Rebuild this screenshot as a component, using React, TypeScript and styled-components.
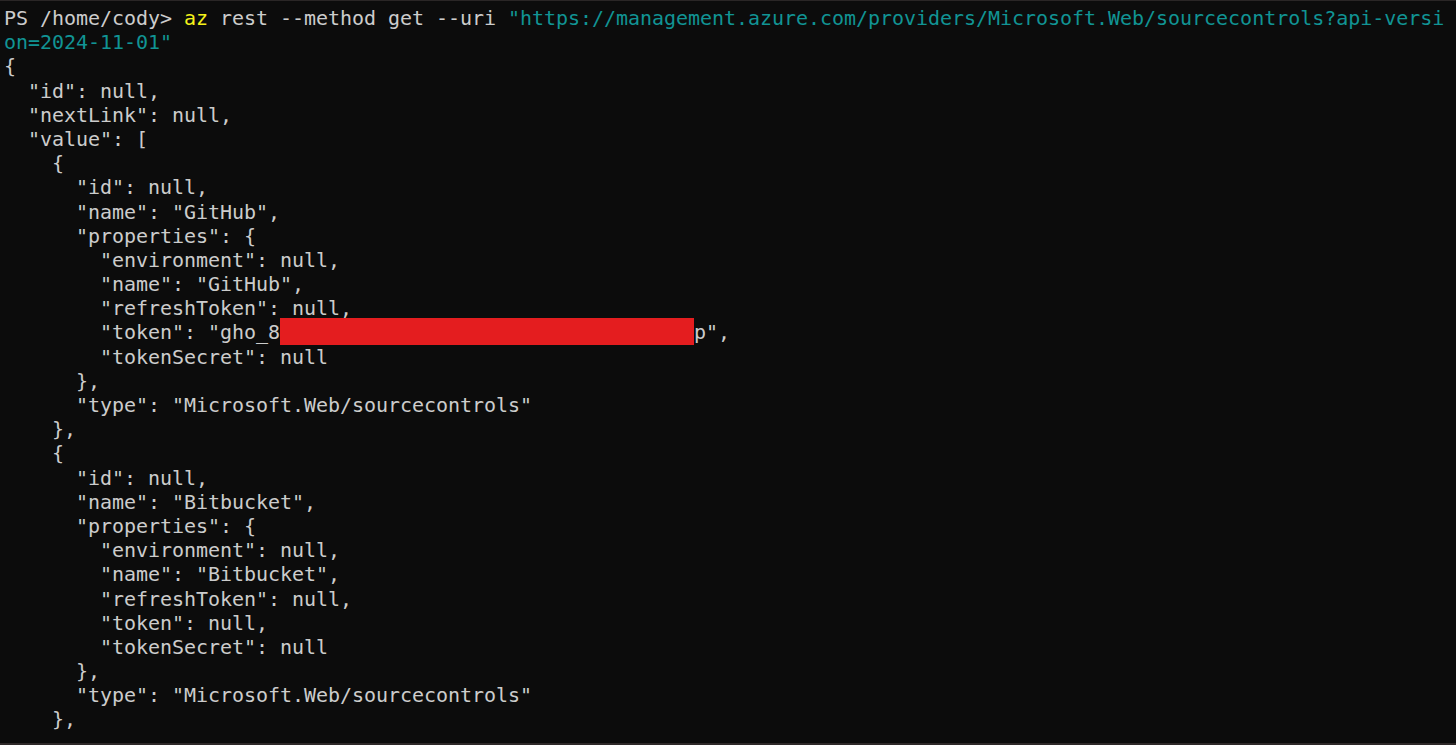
import React from "react";
import styled, { createGlobalStyle } from "styled-components";

const GlobalStyle = createGlobalStyle`
  html, body {
    margin: 0;
    padding: 0;
    background: #0c0c0c;
  }
  #root {
    width: 1456px;
    height: 745px;
  }
`;

const Window = styled.div`
  box-sizing: border-box;
  width: 1456px;
  height: 745px;
  overflow: hidden;
  background: #0c0c0c;
  border-top: 1px solid #2a2626;
  border-bottom: 2px solid #2e2828;
`;

const Buffer = styled.div`
  display: flex;
  flex-direction: column;
  padding: 5px 0 0 4px;
  font-family: "DejaVu Sans Mono", "Liberation Mono", monospace;
  font-size: 20px;
  letter-spacing: -0.04px;
  color: #cccccc;
`;

const Line = styled.div`
  height: 24.2px;
  line-height: 24.2px;
  white-space: pre;
`;

const Command = styled.span`
  color: #f5f21a;
`;

const Quoted = styled.span`
  color: #119494;
`;

const Redacted = styled.span`
  display: inline-block;
  width: 414px;
  height: 24px;
  vertical-align: top;
  background: #e41d1f;
  box-shadow: 0 -2px 0 #e41d1f, 0 1px 0 #e41d1f;
`;

type Row = { indent: number; text: React.ReactNode };

const sourceControl = (name: string, token: React.ReactNode, last: boolean): Row[] => [
  { indent: 4, text: "{" },
  { indent: 6, text: `"id": null,` },
  { indent: 6, text: `"name": "${name}",` },
  { indent: 6, text: `"properties": {` },
  { indent: 8, text: `"environment": null,` },
  { indent: 8, text: `"name": "${name}",` },
  { indent: 8, text: `"refreshToken": null,` },
  { indent: 8, text: token },
  { indent: 8, text: `"tokenSecret": null` },
  { indent: 6, text: "}," },
  { indent: 6, text: `"type": "Microsoft.Web/sourcecontrols"` },
  { indent: 4, text: last ? "}" : "}," },
];

const rows: Row[] = [
  { indent: 0, text: "{" },
  { indent: 2, text: `"id": null,` },
  { indent: 2, text: `"nextLink": null,` },
  { indent: 2, text: `"value": [` },
  ...sourceControl(
    "GitHub",
    <>
      {`"token": "gho_8`}
      <Redacted aria-label="redacted" />
      {`p",`}
    </>,
    false
  ),
  ...sourceControl("Bitbucket", `"token": null,`, false),
];

export default function App() {
  return (
    <>
      <GlobalStyle />
      <Window>
        <Buffer>
          <Line>
            {"PS /home/cody> "}
            <Command>az</Command>
            {" rest --method get --uri "}
            <Quoted>"https://management.azure.com/providers/Microsoft.Web/sourcecontrols?api-versi</Quoted>
          </Line>
          <Line>
            <Quoted>on=2024-11-01"</Quoted>
          </Line>
          {rows.map((r, i) => (
            <Line key={i}>
              {" ".repeat(r.indent)}
              {r.text}
            </Line>
          ))}
        </Buffer>
      </Window>
    </>
  );
}
